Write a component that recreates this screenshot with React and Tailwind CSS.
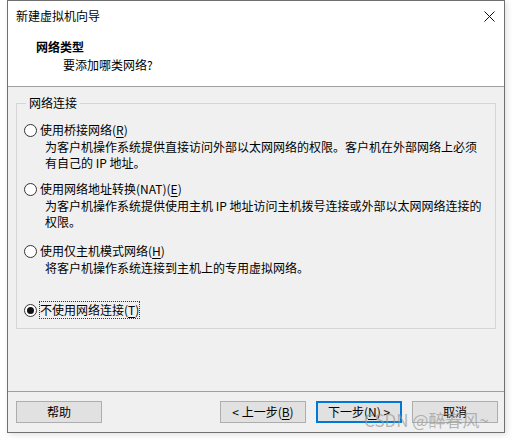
import React from 'react';

const font = { fontFamily: '"Noto Sans CJK SC", "Microsoft YaHei", sans-serif' };

const Radio = ({ checked }) => (
  <span className="flex h-[13px] w-[13px] shrink-0 items-center justify-center rounded-full border border-[#333] bg-white">
    {checked && <span className="h-[7px] w-[7px] rounded-full bg-[#111]"></span>}
  </span>
);

const Option = ({ label, hotkey, desc, checked, className }) => (
  <div className={className}>
    <div className="flex h-4 items-center gap-[3px]">
      <Radio checked={checked} />
      <span className={`leading-4 ${checked ? 'outline outline-1 outline-dotted outline-[#333]' : ''}`}>
        {label}(<span className="underline underline-offset-2">{hotkey}</span>)
      </span>
    </div>
    {desc && (
      <div className="mt-[1px] pl-[21px] leading-4">
        {desc.map((line, i) => (
          <div key={i}>{line}</div>
        ))}
      </div>
    )}
  </div>
);

const Btn = ({ children, primary }) => (
  <button
    className={`h-[22px] w-[86px] bg-[#e1e1e1] text-[12px] text-black ${primary ? 'border-2 border-[#0078d7]' : 'border border-[#adadad]'}`}
  >
    {children}
  </button>
);

export default function App() {
  return (
    <div className="relative h-[440px] w-[513px] overflow-hidden bg-white text-[12px] text-black" style={font}>
      <div className="ml-[7px] flex h-[433px] w-[498px] flex-col border border-[#707070] shadow-[2px_2px_6px_rgba(0,0,0,0.12)]">
        {/* header */}
        <div className="h-[86px] border-b border-[#a0a0a0] bg-white">
          <div className="flex h-[30px] items-center justify-between pl-2 pr-[9px]">
            <span className="leading-4">新建虚拟机向导</span>
            <svg width="11" height="11" viewBox="0 0 11 11">
              <path d="M0.5 0.5 L10.5 10.5 M10.5 0.5 L0.5 10.5" stroke="#111" strokeWidth="1" />
            </svg>
          </div>
          <div className="mt-[8px] pl-[28px] font-bold leading-4">网络类型</div>
          <div className="mt-[2px] pl-[55px] leading-4">要添加哪类网络?</div>
        </div>

        {/* body */}
        <div className="flex flex-1 flex-col bg-[#f0f0f0]">
          <div className="px-2 pt-2">
            <fieldset className="border border-[#d5d5d5] px-[7px] pb-[10px]">
              <legend className="ml-[2px] px-[3px] leading-4">网络连接</legend>
              <Option
                className="mt-[11px]"
                label="使用桥接网络"
                hotkey="R"
                desc={[
                  '为客户机操作系统提供直接访问外部以太网网络的权限。客户机在外部网络上必须',
                  '有自己的 IP 地址。',
                ]}
              />
              <Option
                className="mt-[10px]"
                label="使用网络地址转换(NAT)"
                hotkey="E"
                desc={[
                  '为客户机操作系统提供使用主机 IP 地址访问主机拨号连接或外部以太网网络连接的',
                  '权限。',
                ]}
              />
              <Option
                className="mt-[13px]"
                label="使用仅主机模式网络"
                hotkey="H"
                desc={['将客户机操作系统连接到主机上的专用虚拟网络。']}
              />
              <Option className="mt-[26px]" label="不使用网络连接" hotkey="T" checked />
            </fieldset>
          </div>

          <div className="flex-1"></div>

          <div className="border-t border-[#a0a0a0] pb-[9px] pl-2 pr-[6px] pt-[9px]">
            <div className="flex items-center">
              <Btn>帮助</Btn>
              <div className="flex-1"></div>
              <div className="flex gap-[10px]">
                <Btn>
                  &lt; 上一步(<span className="underline underline-offset-2">B</span>)
                </Btn>
                <Btn primary>
                  下一步(<span className="underline underline-offset-2">N</span>) &gt;
                </Btn>
                <Btn>取消</Btn>
              </div>
            </div>
          </div>
        </div>
      </div>

      {/* watermark */}
      <div className="absolute left-[364px] top-[410px] text-[17px] leading-5 text-[#9a9a9a]/70" style={font}>
        CSDN @醉春风~
      </div>
    </div>
  );
}
